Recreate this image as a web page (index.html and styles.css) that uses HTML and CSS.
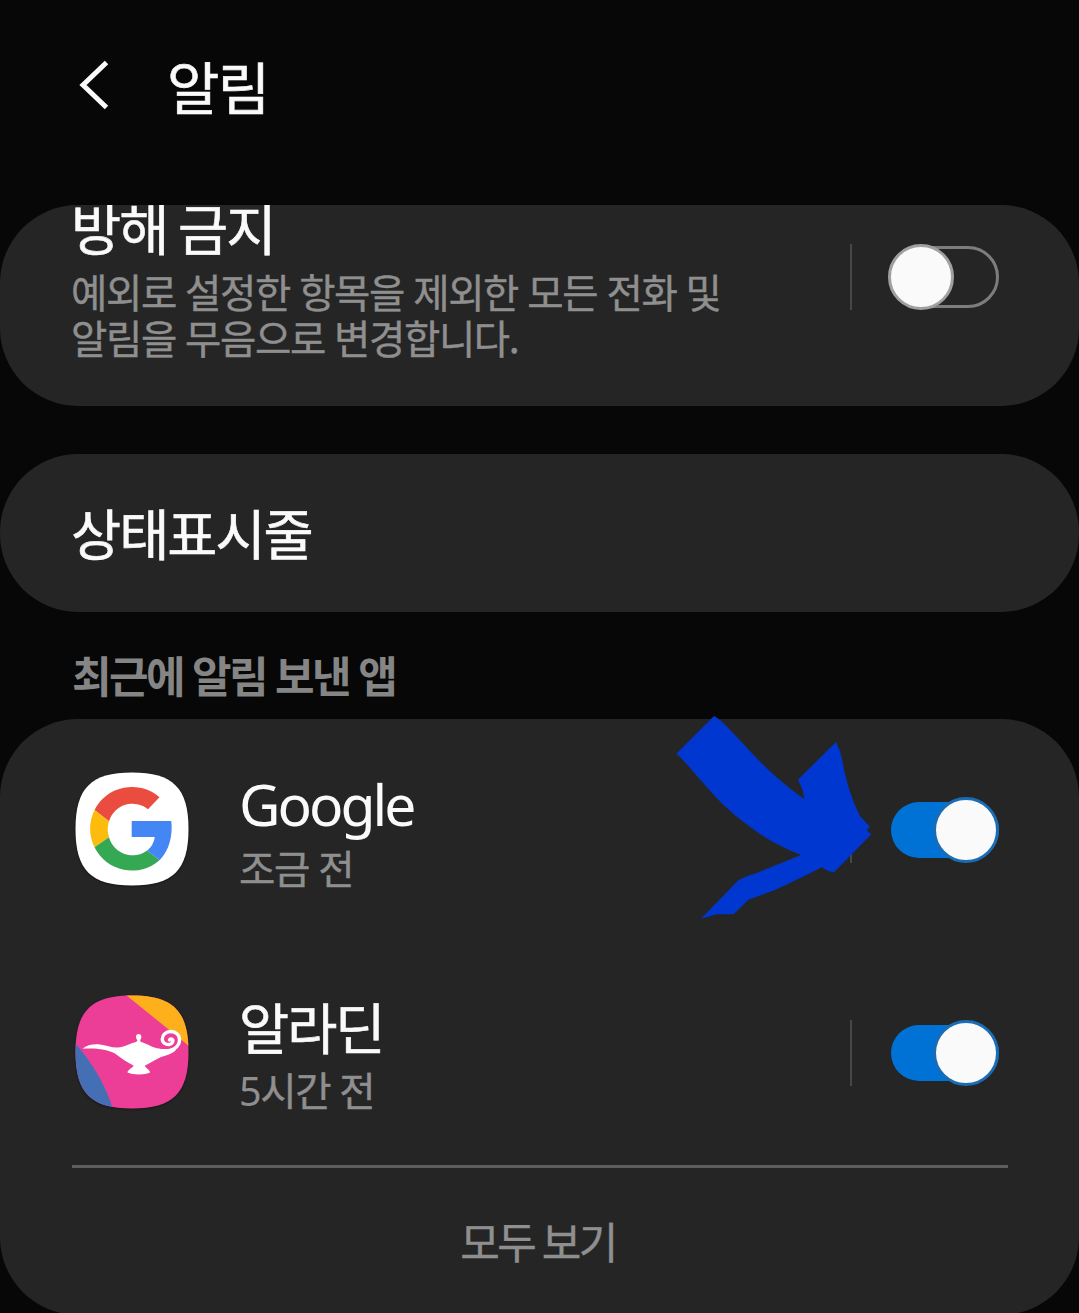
FILE: index.html
```html
<!DOCTYPE html>
<html lang="ko">
<head>
    <meta charset="UTF-8">
    <meta name="viewport" content="width=device-width, initial-scale=1.0">
    <title>알림</title>
    <link rel="stylesheet" href="styles.css">
</head>
<body>
    <header class="header">
        <svg class="back" viewBox="0 0 30 50">
            <path d="M27.500 2.500L4 25L27.500 47.500" fill="none" stroke="#fafafa" stroke-width="5"/>
        </svg>
        <h1>알림</h1>
    </header>

    <section class="card dnd">
        <div class="text">
            <h2>방해 금지</h2>
            <p>예외로 설정한 항목을 제외한 모든 전화 및<br>알림을 무음으로 변경합니다.</p>
        </div>
        <div class="control">
            <div class="switch"><span class="thumb"></span></div>
        </div>
    </section>

    <section class="card status">
        <h2>상태표시줄</h2>
    </section>

    <h3 class="label">최근에 알림 보낸 앱</h3>

    <section class="card apps">
        <div class="app">
            <svg class="icon" viewBox="0 0 114 114">
                <path d="M57 .5C98 .5 113.500 16 113.500 57S98 113.500 57 113.500S.5 98 .5 57S16 .5 57 .5Z" fill="#fff"/>
                <path d="M19.500 38A41.800 41.800 0 0 1 84.500 25.300L73 37.300A24.500 24.500 0 0 0 34 49.300Z" fill="#ea4c40"/>
                <path d="M19.500 38A41.800 41.800 0 0 0 19.500 75.300L34 65.200A24.500 24.500 0 0 1 34 49.300Z" fill="#fbbc0d"/>
                <path d="M19.500 75.300A41.800 41.800 0 0 0 84.500 88.200L72.200 78.500A24.500 24.500 0 0 1 34 65.200Z" fill="#34a853"/>
                <path d="M56.700 49H96.300C98 64 94 79 84.500 88.200L72.200 78.500C76 75.500 79 71 79.700 65H56.700Z" fill="#4486f4"/>
            </svg>
            <div class="text">
                <h2 class="latin">Google</h2>
                <p>조금 전</p>
            </div>
            <div class="control">
                <div class="switch on"><span class="thumb"></span></div>
            </div>
        </div>
        <div class="app">
            <svg class="icon" viewBox="0 0 114 114">
                <clipPath id="tile">
                    <path d="M57 .5C98 .5 113.500 16 113.500 57S98 113.500 57 113.500S.5 98 .5 57S16 .5 57 .5Z"/>
                </clipPath>
                <g clip-path="url(#tile)">
                    <path d="M0 0H114V114H0Z" fill="#ed3e97"/>
                    <path d="M51 0L114 51V0Z" fill="#fdb01b"/>
                    <path d="M0 48Q27 79 38 114H0Z" fill="#456fb4"/>
                </g>
                <path d="M7.500 53.700C12 50 18 48.800 25 49.500C32 50.300 38 53.500 45 52.300C52 51 56 48 61 47L62.500 45.500C60 42 61 39 63.500 39C66.500 39 67.500 42 65 45.500L66 47C71 48 75 51.500 82 53.300C88 54.500 92 54.200 96 53.500L101 55C97 59.500 90 60.500 84 63C78 66 74 68.500 70 70.500C70 73 75 74.500 75 77.500C71 80 57 80 52.500 77.500C52.500 74.500 58 73 58.500 70.500C52 67 47 64 42 60C36 55 23 52.500 7.500 53.700Z" fill="#fff"/>
                <path d="M86 55.800C98 57.500 104.500 51 104.500 45C104.500 39 100 36.500 95.500 36.500C91 36.500 87.300 40 87.300 44C87.300 48 91 49.700 94 49.500C97.500 49 98.500 46.500 97.700 44.800C97 43.500 95 43.500 94.500 45" fill="none" stroke="#fff" stroke-width="3.400" stroke-linecap="round"/>
            </svg>
            <div class="text">
                <h2>알라딘</h2>
                <p><span class="num">5</span>시간 전</p>
            </div>
            <div class="control">
                <div class="switch on"><span class="thumb"></span></div>
            </div>
        </div>
        <div class="more">모두 보기</div>

        <!-- marker arrow pointing at the first switch -->
        <svg class="arrow" viewBox="0 0 1050 690">
            <path d="M162 48C185 60 205 85 225 105C290 175 340 232 433 297C430 275 425 258 413 240L528 126C535 142 542 155 546 178C556 235 575 300 600 348L630 381L620 391L634 403L522 517C507 516 497 509 485 502C430 530 385 552 345 570L265 599L221 643H170L123 656L235 541C250 533 265 527 282 522L423 465C360 440 320 418 275 384C205 335 165 290 125 244C100 217 70 177 49 161Z" fill="#0037d1"/>
        </svg>
    </section>
</body>
</html>
```
FILE: styles.css
```css
body {
    font-family: "Noto Sans CJK KR", sans-serif;
    background-color: #070707;
    color: #fafafa;
    height: 1313px;
    margin: 0;
    overflow: hidden;
}
h1, h2, h3, p {
    margin: 0;
    font-weight: 400;
    white-space: nowrap;
}
.header {
    display: flex;
    align-items: center;
    height: 170px;
    padding-left: 79px;
    margin-bottom: 35px;
}
.back {
    width: 30px;
    height: 50px;
    margin-right: 58px;
}
h1 {
    font-size: 57px;
    line-height: 60px;
    letter-spacing: -1.6px;
    -webkit-text-stroke: 0.6px;
}
h2 {
    font-size: 54.5px;
    line-height: 60px;
    letter-spacing: -2px;
    word-spacing: -2.5px;
    margin-left: -1px;
    -webkit-text-stroke: 0.6px;
}
p {
    color: #8f8f8f;
    font-size: 39.5px;
    line-height: 46px;
    letter-spacing: -1.4px;
    word-spacing: -0.4px;
    margin-left: -1px;
    -webkit-text-stroke: 0.4px;
}
.card {
    box-sizing: border-box;
    background: #252525;
    border-radius: 78px;
    padding: 0 80px 0 72px;
}
.dnd {
    display: flex;
    height: 201px;
    margin-bottom: 48px;
    overflow: hidden;
}
.dnd .text {
    margin-top: -8px;
}
.dnd p {
    margin-top: 11px;
}
.dnd .control {
    margin-top: 39px;
}
.status {
    display: flex;
    align-items: center;
    height: 158px;
    padding-bottom: 2px;
}
.label {
    color: #858585;
    font-size: 43px;
    font-weight: 700;
    line-height: 60px;
    letter-spacing: -2.6px;
    word-spacing: -0.3px;
    padding: 32px 72px 15px;
}
.apps {
    position: relative;
    height: 596px;
}
.app {
    display: flex;
    align-items: center;
    height: 223px;
}
.icon {
    width: 114px;
    height: 114px;
    margin: 0 51px 3px 3px;
    filter: drop-shadow(0 1px 1px rgba(0, 0, 0, 0.4));
}
.app .text {
    margin-top: 2px;
}
.app p {
    margin-top: 10px;
}
.app .control {
    margin-bottom: 2px;
}
.latin {
    font-family: "Noto Sans", sans-serif;
    font-size: 57px;
    line-height: 64px;
    letter-spacing: -3px;
    margin-top: -2px;
    margin-bottom: -2px;
    -webkit-text-stroke: 0;
}
.num {
    font-family: "Noto Sans", sans-serif;
    -webkit-text-stroke: 0;
}
.control {
    display: flex;
    align-items: center;
    justify-content: flex-end;
    box-sizing: border-box;
    width: 149px;
    height: 66px;
    margin-left: auto;
    border-left: 2px solid #474747;
}
.switch {
    display: flex;
    align-items: center;
    box-sizing: border-box;
    width: 110px;
    height: 62px;
    border: 3px solid #7d7d7d;
    border-radius: 31px;
}
.thumb {
    box-sizing: border-box;
    flex: none;
    width: 66px;
    height: 66px;
    margin-left: -4px;
    background: #fafafa;
    border: 3px solid #a0a0a0;
    border-radius: 50%;
}
.switch.on {
    justify-content: flex-end;
    width: 108px;
    height: 56px;
    background: #0072d6;
    border: none;
}
.on .thumb {
    border-color: #1a6cb4;
}
.more {
    color: #8f8f8f;
    font-size: 43px;
    line-height: 60px;
    letter-spacing: -2.6px;
    word-spacing: -2px;
    text-align: center;
    border-top: 3px solid #5e5e5e;
    padding: 42px 4px 0 0;
    margin-right: -9px;
    -webkit-text-stroke: 0.4px;
}
.arrow {
    position: absolute;
    left: 660px;
    top: -19px;
    width: 350px;
    height: 230px;
}
```
